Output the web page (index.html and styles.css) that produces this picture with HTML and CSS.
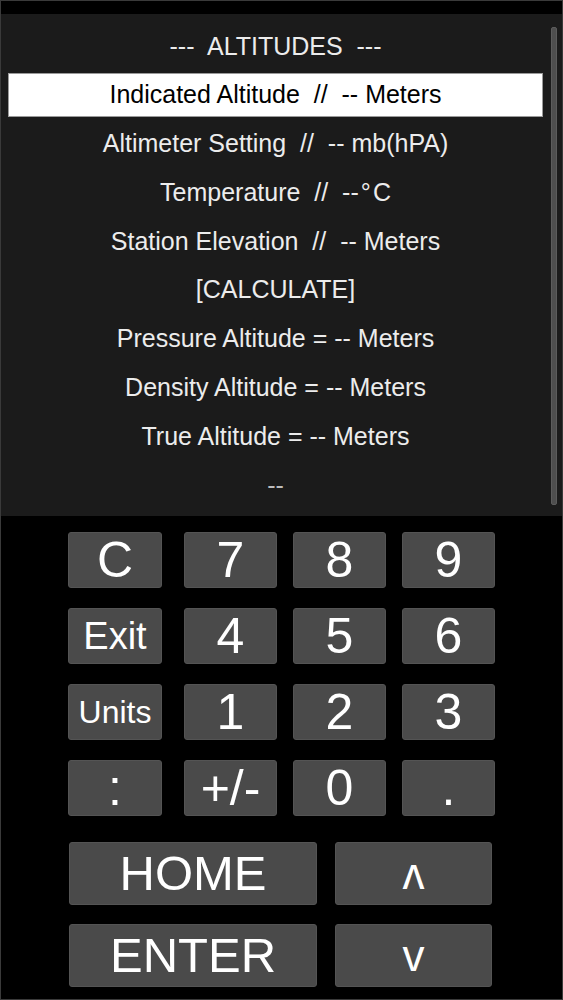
FILE: index.html
```html
<!DOCTYPE html>
<html lang="en">

<head>
  <meta charset="UTF-8">
  <meta name="viewport" content="width=device-width, initial-scale=1.0">
  <title>Altitudes</title>
  <link rel="stylesheet" href="styles.css">
</head>

<body>
  <div class="device">
    <div class="topbar"></div>

    <section class="screen">
      <ul class="menu">
        <li class="title">---  ALTITUDES  ---</li>
        <li class="selected">Indicated Altitude  //  -- Meters</li>
        <li>Altimeter Setting  //  -- mb(hPA)</li>
        <li>Temperature  //  --&#8202;°&#8202;C</li>
        <li>Station Elevation  //  -- Meters</li>
        <li>[CALCULATE]</li>
        <li>Pressure Altitude = -- Meters</li>
        <li>Density Altitude = -- Meters</li>
        <li>True Altitude = -- Meters</li>
        <li class="dim">--</li>
      </ul>
      <div class="scrollbar"></div>
    </section>

    <section class="keypad">
      <div class="keys">
        <button class="key">C</button>
        <button class="key">7</button>
        <button class="key">8</button>
        <button class="key">9</button>

        <button class="key word">Exit</button>
        <button class="key">4</button>
        <button class="key">5</button>
        <button class="key">6</button>

        <button class="key word small">Units</button>
        <button class="key">1</button>
        <button class="key">2</button>
        <button class="key">3</button>

        <button class="key">:</button>
        <button class="key">+/-</button>
        <button class="key">0</button>
        <button class="key">.</button>
      </div>

      <div class="nav-keys">
        <button class="key wide">HOME</button>
        <button class="key arrow">ʌ</button>
        <button class="key wide">ENTER</button>
        <button class="key arrow">v</button>
      </div>
    </section>
  </div>
</body>

</html>
```

FILE: styles.css
```css
body {
  margin: 0;
  padding: 0;
  background-color: #000;
  font-family: "Liberation Sans", Arial, sans-serif;
}

.device {
  box-sizing: border-box;
  width: 563px;
  height: 1000px;
  border: 1px solid #3a3a3a;
  background-color: #000;
  overflow: hidden;
}

.topbar {
  height: 13px;
}

.screen {
  display: flex;
  height: 502px;
  padding-left: 7px;
  background-color: #1b1b1b;
}

.menu {
  list-style: none;
  margin: 0;
  padding: 10px 0 0;
  width: 535px;
  display: flex;
  flex-direction: column;
  gap: 4.8px;
}

.menu li {
  box-sizing: border-box;
  height: 44px;
  display: flex;
  justify-content: center;
  align-items: center;
  font-size: 25px;
  color: #ececec;
  white-space: pre;
}

.menu li.selected {
  background-color: #fff;
  color: #000;
  border: 1px solid #9a9a9a;
}

.menu li.dim {
  color: #bdbdbd;
}

.scrollbar {
  width: 6px;
  margin: 13px 0 11px 8px;
  background-color: #4e4e4e;
  border: 1px solid #5c5c5c;
  box-sizing: border-box;
  border-radius: 2px;
}

.keypad {
  padding: 16px 0 0 67px;
}

.keys {
  display: grid;
  grid-template-columns: 100px 93px 93px 93px;
  grid-auto-rows: 56px;
  column-gap: 16px;
  row-gap: 20px;
}

.keys .key:nth-child(4n + 1) {
  width: 94px;
}

.key {
  display: flex;
  justify-content: center;
  align-items: center;
  padding: 0;
  margin: 0;
  background-color: #4a4a4a;
  border: 1px solid #545454;
  border-radius: 3px;
  color: #fff;
  font-family: "Liberation Sans", Arial, sans-serif;
  font-size: 50px;
  line-height: 1;
  cursor: pointer;
}

.key.word {
  font-size: 38px;
}

.key.small {
  font-size: 32px;
}

.nav-keys {
  display: grid;
  grid-template-columns: 248px 157px;
  grid-auto-rows: 63px;
  column-gap: 18px;
  row-gap: 19px;
  margin: 26px 0 0 1px;
}

.key.wide {
  font-size: 49px;
}

.key.arrow {
  font-size: 44px;
  font-family: "Liberation Sans", "DejaVu Sans", sans-serif;
}
```
